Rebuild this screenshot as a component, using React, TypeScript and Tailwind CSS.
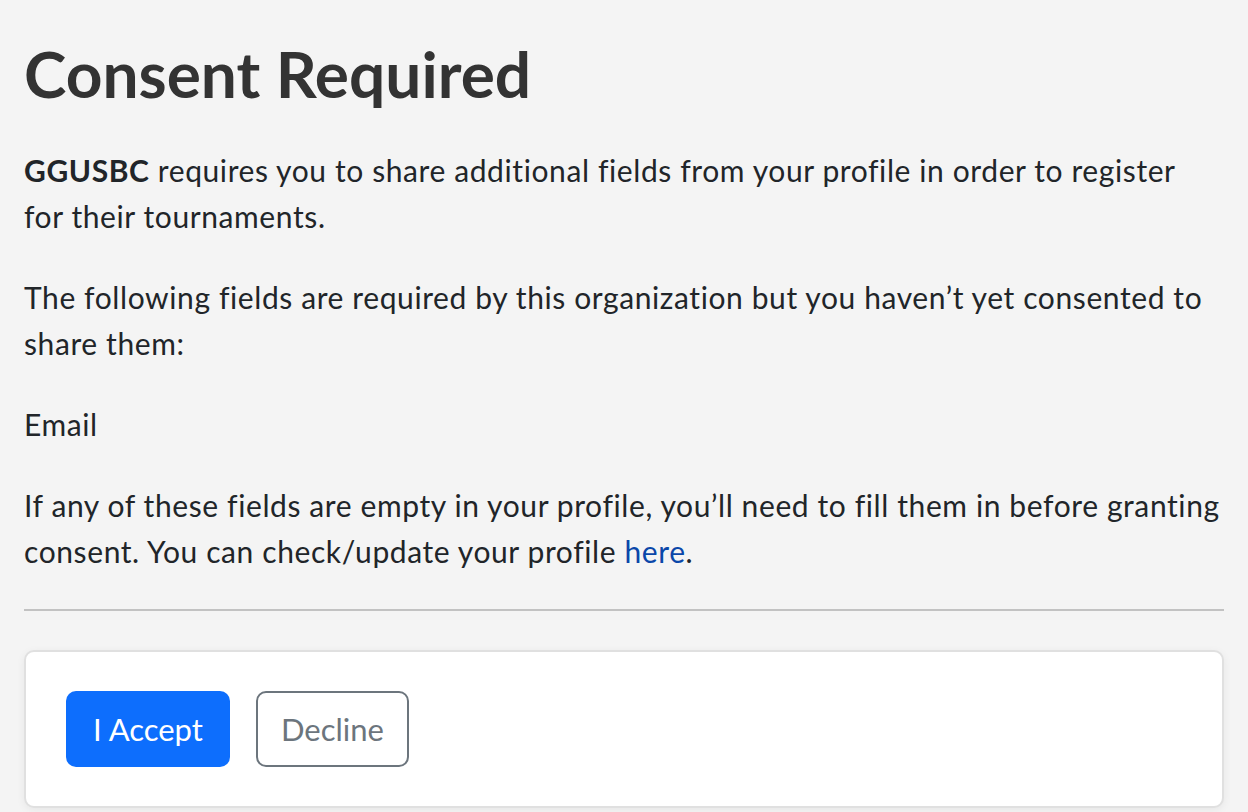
export default function App() {
  return (
    <div className="min-h-[812px] bg-[#f4f4f4] px-[24px] pt-[36px] text-[#212529] [font-variant-ligatures:none]" style={{ fontFamily: 'Lato, "Open Sans", sans-serif' }}>
      <h1 className="text-[64px] font-bold leading-[1.2] text-[#333333] mb-[34px]">Consent Required</h1>
      <div className="text-[30px] leading-[46px] tracking-[0.6px]">
        <p className="mb-[35px]">
          <span className="whitespace-nowrap"><b className="font-bold">GGUSBC</b> requires you to share additional fields from your profile in order to register</span><br />for their tournaments.
        </p>
        <p className="mb-[35px]">
          <span className="whitespace-nowrap">The following fields are required by this organization but you haven’t yet consented to</span><br />share them:
        </p>
        <p className="mb-[35px]">Email</p>
        <p className="mb-[35px]">
          <span className="whitespace-nowrap">If any of these fields are empty in your profile, you’ll need to fill them in before granting</span><br />consent. You can check/update your profile <a className="text-[#0a47a9]" href="#">here</a>.
        </p>
      </div>
      <div className="h-[2px] bg-[#c2c2c2]"></div>
      <div className="mt-[39px] rounded-[10px] border-2 border-[#e0e0e0] bg-white px-[40px] pt-[39px] pb-[39px] shadow-[0_2px_8px_rgba(0,0,0,0.06)]">
        <div className="flex gap-[26px]">
          <button className="h-[76px] w-[164px] rounded-[10px] bg-[#0d6efd] text-[31px] text-white">I Accept</button>
          <button className="h-[76px] w-[153px] rounded-[10px] border-2 border-[#6c757d] text-[31px] text-[#6c757d]">Decline</button>
        </div>
      </div>
    </div>
  );
}
